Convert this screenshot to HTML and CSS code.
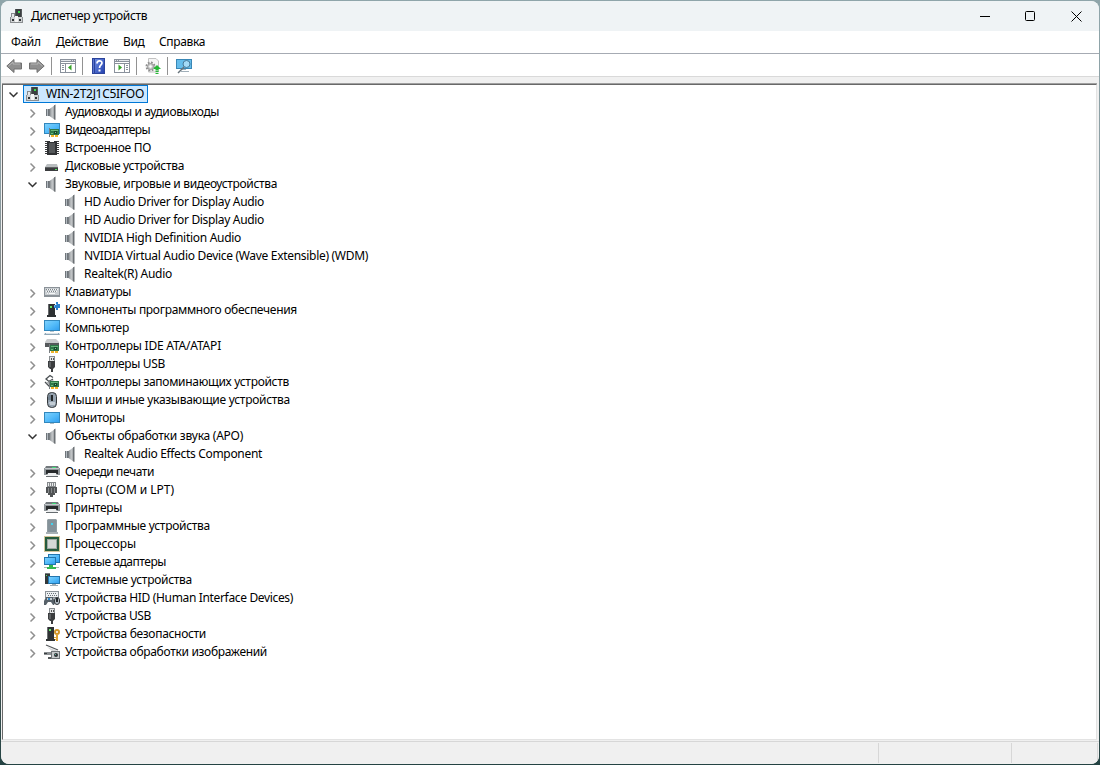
FILE: index.html
```html
<!DOCTYPE html>
<html lang="ru">
  <head>
    <meta charset="UTF-8" />
    <title>Диспетчер устройств</title>
    <link rel="stylesheet" href="styles.css">
  </head>
  <body>
    <svg class="sprite" width="0" height="0">
      <defs>
        <linearGradient id="blue" x1="0" y1="0" x2="1" y2="1">
          <stop offset="0" stop-color="#7dd0fd" />
          <stop offset="0.5" stop-color="#55bcfa" />
          <stop offset="1" stop-color="#319ff0" />
        </linearGradient>
        <linearGradient id="cone" x1="0" x2="1">
          <stop offset="0" stop-color="#84898d" />
          <stop offset="0.5" stop-color="#c4c7c9" />
          <stop offset="1" stop-color="#8b8f92" />
        </linearGradient>
        <linearGradient id="help" x1="0" y1="0" x2="1" y2="1">
          <stop offset="0" stop-color="#6b8ae0" />
          <stop offset="1" stop-color="#2442b0" />
        </linearGradient>
      </defs>
      <symbol id="i-root" viewBox="0 0 16 16">
        <path fill="#55595b" d="M6 1h7v8H6z" />
        <path fill="#3b3f41" d="M7 1h5v8H7z" />
        <path fill="#3ae04c" d="M9 3h2v2H9z" />
        <path fill="#85898c" d="M2 5h4v4H2z" />
        <path fill="#e6e8e9" d="M3 6h2v3H3z" />
        <path fill="#8b8f92" d="M1 9h13v6H1z" />
        <path fill="#d0d3d5" d="M2 9h11v5H2z" />
        <path fill="#303436" d="M3 11h2v2H3zM10 11h2v2h-2z" />
        <path fill="#f4f5f5" d="M6 8h3v6H6z" />
      </symbol>
      <symbol id="i-sound" viewBox="0 0 16 16">
        <path fill="#6f757a" d="M2 5h4v7H2z" />
        <path fill="#b3bac0" d="M3 5h1v7H3z" />
        <path fill="url(#cone)" d="M5.500 5L11 1v15l-5.500-4z" />
        <path fill="#6b7074" d="M10 1.500l1.500-1v15.500l-1.500-1z" />
      </symbol>
      <symbol id="i-card" viewBox="0 0 16 16">
        <path fill="#2e7848" d="M6 7h9v6H6z" />
        <path fill="#777d80" d="M5 6h1v9H5z" />
        <path fill="#68b67b" d="M7 8h7v1H7zM7 11h2v1H7z" />
        <path fill="#174b2d" d="M10 9h3v3h-3z" />
        <path fill="#7bce94" d="M11 10h1v1h-1z" />
        <path fill="#f0b429" d="M7 13h3v2H7zM11 13h3v2h-3z" />
      </symbol>
      <symbol id="i-display" viewBox="0 0 16 16">
        <path fill="#3187bd" d="M0 1h16v11H0z" />
        <path fill="url(#blue)" d="M1 2h14v9H1z" />
        <use href="#i-card" />
      </symbol>
      <symbol id="i-firmware" viewBox="0 0 16 16">
        <path fill="#303234" d="M3 1h3v1h4V1h3v14H3z" />
        <path fill="#55585a" d="M5 3h6v10H5z" />
        <path stroke="#3b3e40" stroke-dasharray="1 1" stroke-width="2" d="M2 1v14M14 1v14" />
      </symbol>
      <symbol id="i-disk" viewBox="0 0 16 16">
        <path fill="#b9bdbf" d="M3 6h10l1 3H1z" />
        <path fill="#3b3d3f" d="M1 9h13v4H1z" />
        <path fill="#5f6264" d="M1 9h13v1H1z" />
        <path fill="#55e363" d="M11 11h2v1h-2z" />
      </symbol>
      <symbol id="i-keyboard" viewBox="0 0 16 16">
        <path fill="#8b9298" d="M0 3h16v10H0z" />
        <path fill="#c8cdd1" d="M1 4h14v7H1z" />
        <path stroke="#7e858a" stroke-dasharray="1 1" d="M2 5.500h12M3 7.500h10" />
        <path stroke="#f7f8f8" stroke-dasharray="1 1" d="M3 5.500h12M2 7.500h12M3 9.500h2" />
        <path stroke="#f7f8f8" d="M5 9.500h6" />
      </symbol>
      <symbol id="i-software" viewBox="0 0 16 16">
        <path fill="#2e3133" d="M4 2h7v11h1v2H3v-2h1z" />
        <path fill="#66696b" d="M4 2h1v11H4z" />
        <path fill="#63e764" d="M6 4h2v2H6z" />
        <path fill="#2a81ce" d="M12 0h2v2h2v4h-2v2h-2V6h-2V3h2z" />
        <path fill="#70b7ed" d="M12 2h1v1h-1zM10 3h1v2h-1z" />
      </symbol>
      <symbol id="i-computer" viewBox="0 0 16 16">
        <path fill="#3187bd" d="M0 0h16v11H0z" />
        <path fill="url(#blue)" d="M1 1h14v9H1z" />
        <path fill="#b8c5cd" d="M6 11h4v1H6z" />
        <path fill="#8fa7b7" d="M1 13h14l1 2H0z" />
        <path fill="#dae3e9" d="M2 13h12v1H2z" />
      </symbol>
      <symbol id="i-ide" viewBox="0 0 16 16">
        <path fill="#c9cbcd" d="M3 1h9l3 3v2H1V4z" />
        <path fill="#55595b" d="M1 5h14v3H5v1H1z" />
        <use href="#i-card" />
      </symbol>
      <symbol id="i-usb" viewBox="0 0 16 16">
        <path fill="#888d90" d="M5 0h6v6H5z" />
        <path fill="#e4e6e7" d="M6 1h4v4H6z" />
        <path fill="#555" d="M7 2h1v2H7zM9 2h1v2H9z" />
        <path fill="#3b3d3f" d="M4 5h7v6l-2 2v3H7v-3H6l-2-2z" />
        <path fill="#5f6264" d="M5 6h2v5H5z" />
      </symbol>
      <symbol id="i-storage" viewBox="0 0 16 16">
        <path fill="none" stroke="#4a4f52" stroke-width="1.3" d="M9 5L5 7.500 2 5 6 1.500l3 2M1 8l4 4h2" />
        <path fill="#a3a8ab" d="M2 9l6-3 5 2-5 3z" />
        <use href="#i-card" />
      </symbol>
      <symbol id="i-mouse" viewBox="0 0 16 16">
        <rect x="3.500" y=".5" width="9" height="15" rx="4" fill="#95a3b0" stroke="#34383b" />
        <path fill="#738391" d="M5 3h3v5H4V5z" />
        <path fill="#222628" d="M7 3h2v6H7z" />
        <path fill="#c3cdd5" d="M5 10h6v3H6z" />
      </symbol>
      <symbol id="i-monitor" viewBox="0 0 16 16">
        <path fill="#3187bd" d="M0 2h16v11H0z" />
        <path fill="url(#blue)" d="M1 3h14v9H1z" />
        <path fill="#aebcc5" d="M6 13h4v1H6z" />
      </symbol>
      <symbol id="i-printer" viewBox="0 0 16 16">
        <path fill="#73797d" d="M2 2h12l1 2H1z" />
        <path fill="#8f9599" d="M0 4h16v7H0z" />
        <path fill="#c3c8cb" d="M1 4h14v1H1z" />
        <path fill="#3edb77" d="M8 3h4v1H8z" />
        <path fill="#272a2c" d="M2 6h12v4H2z" />
        <path fill="#eceeef" d="M4 9h8l1 3H3z" />
        <path fill="#666c70" d="M2 12h12v1H2z" />
      </symbol>
      <symbol id="i-port" viewBox="0 0 16 16">
        <path fill="#85898c" d="M3 0h9v5H3z" />
        <path fill="#ebecec" d="M4 1h1v3H4zM6 1h1v3H6zM8 1h1v3H8zM10 1h1v3h-1z" />
        <path fill="#505355" d="M2 5h11v6H2zM4 11h7v2H4zM6 13h3v2H6z" />
        <path fill="#86898b" d="M4 6h1v5H4zM7 6h1v5H7zM10 6h1v5h-1z" />
      </symbol>
      <symbol id="i-program" viewBox="0 0 16 16">
        <path fill="#929da2" d="M4 1h8l1 1v12H3V2z" />
        <path fill="#84929a" d="M4 2h8v12H4z" />
        <path fill="#a8b0b5" d="M2 14h12v2H2z" />
        <path fill="#42d3ef" d="M7 5h2v2H7z" />
      </symbol>
      <symbol id="i-cpu" viewBox="0 0 16 16">
        <rect x=".5" y=".5" width="15" height="15" fill="none" stroke="#a58b35" stroke-dasharray="1 1" />
        <path fill="#265b3d" d="M1 1h14v14H1z" />
        <path fill="#9fa7a2" d="M3 3h10v10H3z" />
        <path fill="#d4d8d6" d="M4 4h8v8H4z" />
      </symbol>
      <symbol id="i-network" viewBox="0 0 16 16">
        <path fill="#2376ae" d="M4 0h12v9H4z" />
        <path fill="url(#blue)" d="M5 1h10v7H5z" />
        <path fill="#2376ae" d="M0 3h12v8H0z" />
        <path fill="url(#blue)" d="M1 4h10v6H1z" />
        <path fill="#32b650" d="M5 11h4v2h3v2H3v-2h2z" />
        <path fill="#a8b7b2" d="M0 13h3v1H0zM12 13h3v1h-3z" />
      </symbol>
      <symbol id="i-system" viewBox="0 0 16 16">
        <path fill="#34383a" d="M1 1h5v11H1z" />
        <path fill="#777c7f" d="M1 1h5v1H1z" />
        <path fill="#4fe064" d="M2 3h1v1H2z" />
        <path fill="#2376ae" d="M4 4h12v8H4z" />
        <path fill="url(#blue)" d="M5 5h10v6H5z" />
        <path fill="#9facb4" d="M8 12h4v1h2v1H6v-1h2z" />
      </symbol>
      <symbol id="i-hid" viewBox="0 0 16 16">
        <path fill="#8b9298" d="M1 1h14v7H1z" />
        <path fill="#edf0f2" d="M2 2h12v5H2z" />
        <path stroke="#697177" stroke-dasharray="1 1" d="M3 3.500h10M4 5.500h9" />
        <path fill="#576169" d="M2 7h7l2 6-1 2H9l-2-3H4l-2 3H0v-4z" />
        <path fill="#c2cbd1" d="M3 8h5v2H3z" />
        <path fill="#2d85c8" d="M4 8h2v2H4z" />
        <rect x="10.500" y="7.500" width="5" height="7" rx="2.500" fill="#b0bac2" stroke="#353b3f" />
        <path fill="#24292c" d="M12 8h2v4h-2z" />
      </symbol>
      <symbol id="i-security" viewBox="0 0 16 16">
        <path fill="#2f3234" d="M3 1h7v12h1v2H2v-2h1z" />
        <path fill="#6c7072" d="M3 1h1v12H3z" />
        <path fill="#62e869" d="M5 3h2v2H5z" />
        <circle cx="13" cy="6" r="2" fill="#fff" stroke="#cf9326" stroke-width="2" />
        <path fill="#e0a534" d="M12 8h2v7h-2zM10 11h2v1h-2zM11 13h1v1h-1z" />
      </symbol>
      <symbol id="i-imaging" viewBox="0 0 16 16">
        <path fill="#d5d7d8" d="M3 3l11 4H8z" />
        <path stroke="#55595b" stroke-width="1.3" d="M2 1l12 5" />
        <path fill="#8b8f92" d="M0 8h8v3H0z" />
        <path fill="#3b3f41" d="M0 9h3v1H0z" />
        <path fill="#6f7477" d="M7 7h9v8H7z" />
        <path fill="#c6cacc" d="M8 8h7v6H8z" />
        <circle cx="12" cy="11" r="2" fill="#303638" />
        <path fill="#5fae9c" d="M11 10h1v1h-1z" />
        <path fill="#55595b" d="M4 13h3v2H4z" />
      </symbol>

      <symbol id="t-arrow" viewBox="0 0 16 16">
        <path fill="#8f8f8f" stroke="#707070" d="M.8 8L8 1.500v3.500h7.500v6H8v3.500z" />
        <path fill="none" stroke="#b5b5b5" d="M2.500 8L7 4v2h7" />
      </symbol>
      <symbol id="t-pane" viewBox="0 0 16 16">
        <path fill="#8a919c" d="M0 1h16v14H0z" />
        <path fill="#e3e6ea" d="M1 2h10v1H1zM12 2h1v1h-1zM14 2h1v1h-1z" />
        <path fill="#fff" d="M1 4h14v1H1zM1 6h4v8H1zM6 6h9v8H6z" />
        <path stroke="#8a919c" d="M2 7.500h2M2 9.500h2M2 11.500h2" />
        <path fill="#36a329" d="M11.500 6.500v6L8 9.500z" />
      </symbol>
      <symbol id="t-help" viewBox="0 0 14 16">
        <path fill="#2b439b" d="M0 0h13v16H0z" />
        <path fill="url(#help)" d="M3 1h9v14H3z" />
        <path fill="#5873cd" d="M1 1h1v14H1z" />
        <path fill="none" stroke="#fff" stroke-width="1.700" d="M5 5.500C5 2 10 2 10 5c0 2-2.500 2-2.500 5" />
        <path fill="#fff" d="M6.500 11.500h2v2h-2z" />
      </symbol>
      <symbol id="t-scan" viewBox="0 0 16 16">
        <path fill="#f5f5f5" stroke="#c2c2c2" d="M3.500.5H11l2.500 2.500v11h-10z" />
        <circle cx="5.500" cy="8.500" r="4" fill="none" stroke="#8d8d8d" stroke-width="2" stroke-dasharray="1.700 1.440" />
        <circle cx="5.500" cy="8.500" r="3" fill="#ccc" stroke="#999" />
        <circle cx="5.500" cy="8.500" r="1.200" fill="#fff" />
        <path fill="#25b835" d="M12 7l4 4h-2.500v1.500h-3V11H8zM10.500 13h3v1h-3zM10.500 15h3v1h-3z" />
      </symbol>
      <symbol id="t-search" viewBox="0 0 16 16">
        <path fill="#3987b6" d="M0 1h16v10H0z" />
        <path fill="#65bdec" d="M1 2h14v8H1z" />
        <path fill="#a1afb9" d="M6 11h4v1H6zM5 13h8v1H5z" />
        <circle cx="10.500" cy="6" r="3.500" fill="#a3daf7" stroke="#457898" />
        <path stroke="#67737b" stroke-width="1.500" d="M8 9l-6 6" />
      </symbol>
    </svg>

    <div class="window">
      <header class="titlebar">
        <svg class="icon"><use href="#i-root" /></svg>
        <span class="title">Диспетчер устройств</span>
        <div class="controls">
          <svg width="46" height="29"><path d="M18 14.500h10" /></svg>
          <svg width="46" height="29"><rect x="17.500" y="9.500" width="9" height="9" rx="1" /></svg>
          <svg width="46" height="29"><path d="M17.500 9.500l10 10M27.500 9.500l-10 10" /></svg>
        </div>
      </header>

      <nav class="menu">
        <span class="m-file">Файл</span>
        <span class="m-action">Действие</span>
        <span class="m-view">Вид</span>
        <span class="m-help">Справка</span>
      </nav>

      <div class="toolbar">
        <svg class="icon"><use href="#t-arrow" /></svg>
        <svg class="icon next flip"><use href="#t-arrow" /></svg>
        <i class="sep"></i>
        <svg class="icon"><use href="#t-pane" /></svg>
        <i class="sep"></i>
        <svg class="icon help"><use href="#t-help" /></svg>
        <svg class="icon next flip"><use href="#t-pane" /></svg>
        <i class="sep"></i>
        <svg class="icon"><use href="#t-scan" /></svg>
        <i class="sep"></i>
        <svg class="icon"><use href="#t-search" /></svg>
      </div>

      <main class="tree" id="tree"></main>

      <footer class="status">
        <div class="cell main"></div>
        <div class="cell wide"></div>
        <div class="cell"></div>
      </footer>
    </div>

    <script src="tree.js"></script>
  </body>
</html>
```
FILE: styles.css
```css
body {
  margin: 0;
  height: 765px;
  overflow: hidden;
  background: linear-gradient(#8fa5aa 0, #8b9da2 25%, #7b7876 45%, #645d57 70%, #324c4c 95%, #244343 100%);
  font-family: "Noto Sans", "Open Sans", sans-serif;
  font-size: 12px;
  color: #000;
}

.sprite {
  position: absolute;
}

.window {
  box-sizing: border-box;
  display: flex;
  flex-direction: column;
  height: 763px;
  margin: 1px 1px 0;
  border-radius: 8px;
  overflow: hidden;
  background: #f0f0f0;
}

.icon {
  width: 16px;
  height: 16px;
  flex: none;
}

.flip {
  transform: scaleX(-1);
}

.titlebar {
  display: flex;
  align-items: center;
  height: 30px;
  padding-left: 8px;
  background: #eff3f5;
}

.title {
  margin-left: 6px;
  padding-bottom: 2px;
  letter-spacing: -0.36px;
}

.controls {
  display: flex;
  margin-left: auto;
  margin-right: -1px;
}

.controls svg {
  fill: none;
  stroke: #000;
}

.menu {
  display: flex;
  align-items: center;
  height: 22px;
  padding-left: 10px;
  background: #fff;
  border-bottom: 1px solid #a6abb3;
}

.menu span {
  padding-bottom: 2px;
  letter-spacing: -0.35px;
  white-space: nowrap;
}

.m-file {
  width: 45px;
}

.m-action {
  width: 67px;
}

.m-view {
  width: 36px;
}

.toolbar {
  display: flex;
  align-items: center;
  height: 23px;
  padding: 2px 0 0 5px;
  background: #fff;
  border-bottom: 1px solid #d9d9d9;
  flex: none;
  box-sizing: border-box;
}

.toolbar .next {
  margin-left: 7px;
}

.toolbar .help {
  width: 14px;
  margin-left: 1px;
}

.toolbar .help + .next {
  margin-left: 8px;
}

.sep {
  width: 1px;
  height: 18px;
  margin: 0 8px 0 6px;
  background: #929292;
}

.tree {
  flex: 1;
  margin: 7px 2px 0 1px;
  border-top: 1px solid #696969;
  border-left: 1px solid #696969;
  border-right: 1px solid #e3e3e3;
  border-bottom: 1px solid #e3e3e3;
  box-shadow: 0 -1px #a0a0a0;
  background: #fff;
}

.row {
  display: flex;
  align-items: center;
  height: 18px;
  padding-left: 22px;
}

.row.root {
  padding-left: 3px;
}

.row.leaf {
  padding-left: 60px;
}

.chevron {
  width: 14px;
  height: 16px;
  margin: 1px 5px 0 0;
  flex: none;
  fill: none;
  stroke: #8f8f8f;
  stroke-width: 1.5;
}

.chevron.open {
  stroke: #333;
}

.label {
  margin-left: 5px;
  white-space: nowrap;
  line-height: 18px;
}

.root .chevron {
  margin-right: 3px;
}

.selected {
  display: flex;
  align-items: center;
  box-sizing: border-box;
  width: 125px;
  height: 18px;
  padding-left: 1px;
  border: 1px solid #0078d7;
  background: #cce8ff;
}

.status {
  display: flex;
  height: 22px;
  margin-top: 1px;
  border-top: 1px solid #d7d7d7;
  background: #f0f0f0;
}

.cell {
  width: 85px;
  height: 20px;
  margin-top: 1px;
  border-right: 1px solid #d7d7d7;
}

.cell.main {
  width: 877px;
}

.cell.wide {
  width: 132px;
}
```
FILE: tree.js
```js
// kind, icon, label, label width in px
const rows = [
  ["root", "root", "WIN-2T2J1C5IFOO", 98],
  ["closed", "sound", "Аудиовходы и аудиовыходы", 154],
  ["closed", "display", "Видеоадаптеры", 85],
  ["closed", "firmware", "Встроенное ПО", 86],
  ["closed", "disk", "Дисковые устройства", 119],
  ["open", "sound", "Звуковые, игровые и видеоустройства", 212],
  ["leaf", "sound", "HD Audio Driver for Display Audio", 180],
  ["leaf", "sound", "HD Audio Driver for Display Audio", 180],
  ["leaf", "sound", "NVIDIA High Definition Audio", 157],
  ["leaf", "sound", "NVIDIA Virtual Audio Device (Wave Extensible) (WDM)", 284],
  ["leaf", "sound", "Realtek(R) Audio", 88],
  ["closed", "keyboard", "Клавиатуры", 66],
  ["closed", "software", "Компоненты программного обеспечения", 232],
  ["closed", "computer", "Компьютер", 64],
  ["closed", "ide", "Контроллеры IDE ATA/ATAPI", 156],
  ["closed", "usb", "Контроллеры USB", 100],
  ["closed", "storage", "Контроллеры запоминающих устройств", 224],
  ["closed", "mouse", "Мыши и иные указывающие устройства", 225],
  ["closed", "monitor", "Мониторы", 60],
  ["open", "sound", "Объекты обработки звука (APO)", 178],
  ["leaf", "sound", "Realtek Audio Effects Component", 178],
  ["closed", "printer", "Очереди печати", 89],
  ["closed", "port", "Порты (COM и LPT)", 109],
  ["closed", "printer", "Принтеры", 57],
  ["closed", "program", "Программные устройства", 145],
  ["closed", "cpu", "Процессоры", 71],
  ["closed", "network", "Сетевые адаптеры", 101],
  ["closed", "system", "Системные устройства", 127],
  ["closed", "hid", "Устройства HID (Human Interface Devices)", 228],
  ["closed", "usb", "Устройства USB", 86],
  ["closed", "security", "Устройства безопасности", 141],
  ["closed", "imaging", "Устройства обработки изображений", 202],
];

const tree = document.getElementById("tree");

function chevron(kind) {
  if (kind === "leaf") return "";
  if (kind === "closed") {
    return '<svg class="chevron" viewBox="0 0 14 16"><path d="M5.500 4.500l4 4-4 4" /></svg>';
  }
  return '<svg class="chevron open" viewBox="0 0 14 16"><path d="M3.500 5.500l4 4 4-4" /></svg>';
}

// spread the letters so that the label takes exactly the given width
function fitLabel(label, width) {
  const natural = label.getBoundingClientRect().width;
  label.style.letterSpacing = (width - natural) / label.textContent.length + "px";
}

rows.forEach(([kind, icon, text, width]) => {
  const row = document.createElement("div");
  row.className = "row " + kind;
  const content = `<svg class="icon"><use href="#i-${icon}" /></svg><span class="label">${text}</span>`;
  row.innerHTML =
    chevron(kind) + (kind === "root" ? `<div class="selected">${content}</div>` : content);
  tree.appendChild(row);
  fitLabel(row.querySelector(".label"), width);
});
```
